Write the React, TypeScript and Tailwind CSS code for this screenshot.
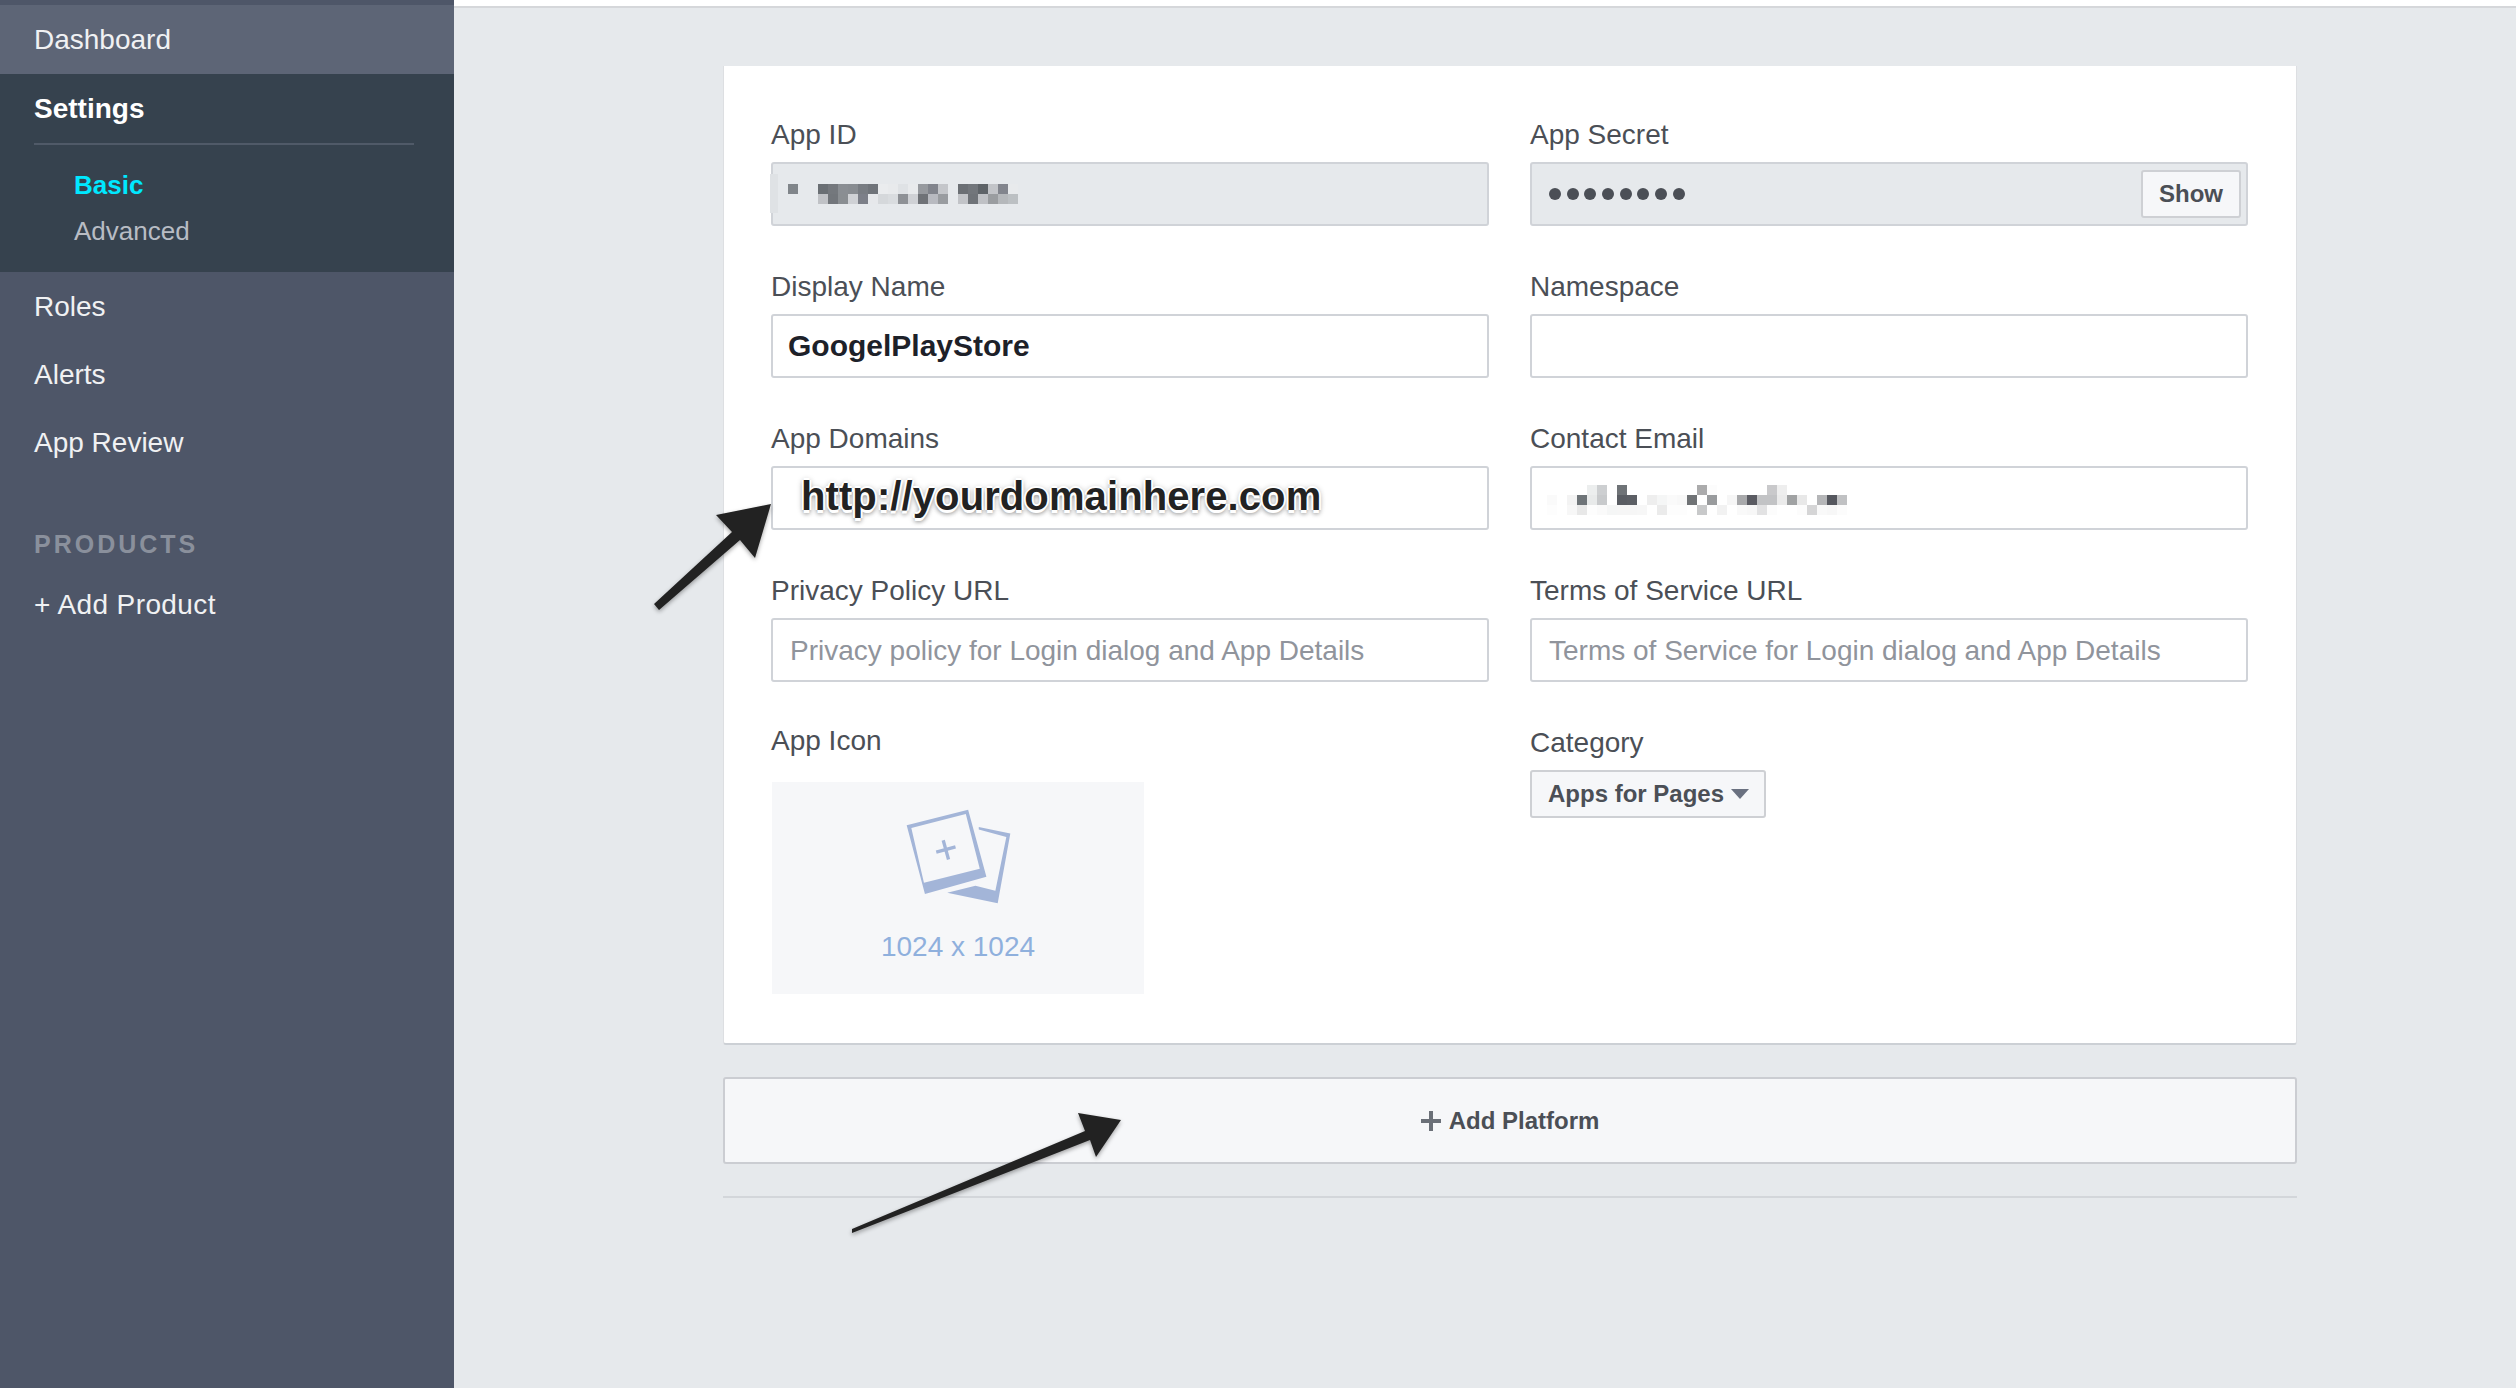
import React from 'react'

type Block = [number, number, string];

// pixelated (censored) text blocks: column, row, colour
const appIdBlocks: Block[] = [
    [0, 0, '#80858a'], [3, 0, '#6a6f74'], [4, 0, '#74787d'], [5, 0, '#8a8e93'], [6, 0, '#888c91'], [7, 0, '#787c82'], [8, 0, '#70747a'],
    [9, 0, '#eaecee'], [10, 0, '#e8eaec'], [11, 0, '#dfe2e5'], [12, 0, '#e8eaec'], [13, 0, '#96999e'], [14, 0, '#81848c'], [15, 0, '#c4c6ca'],
    [17, 0, '#6b6f74'], [18, 0, '#72767b'], [19, 0, '#5e6368'], [20, 0, '#c2c4c8'], [21, 0, '#82858d'], [22, 0, '#e8eaec'],
    [3, 1, '#c0c2c6'], [4, 1, '#72767b'], [5, 1, '#8a8e92'], [6, 1, '#cfd1d5'], [7, 1, '#7c7f88'], [8, 1, '#e6e8eb'], [9, 1, '#d5d8db'],
    [10, 1, '#d9dcdf'], [11, 1, '#8e9196'], [12, 1, '#cfd1d5'], [13, 1, '#6f7277'], [14, 1, '#b8bac0'], [15, 1, '#999ca0'],
    [17, 1, '#c2c4c8'], [18, 1, '#6f7378'], [19, 1, '#bfc1c5'], [20, 1, '#9a9da0'], [21, 1, '#b5b8bb'], [22, 1, '#bcc0c3'],
];

const emailBlocks: Block[] = [
    [4, 0, '#eceeee'], [5, 0, '#cdcfd1'], [7, 0, '#6f7377'], [15, 0, '#ababac'], [16, 0, '#fcfcfc'], [22, 0, '#c9c9cb'], [23, 0, '#eeeeee'],
    [0, 1, '#fafafa'], [2, 1, '#f3f3f3'], [3, 1, '#6e7478'], [4, 1, '#e8eaea'], [5, 1, '#c8cacc'], [7, 1, '#5a5d63'], [8, 1, '#5c5f65'],
    [10, 1, '#eeeeee'], [11, 1, '#f5f6f6'], [12, 1, '#fafafa'], [13, 1, '#f8f8f8'], [14, 1, '#707376'], [16, 1, '#999b9d'], [18, 1, '#f6f6f6'],
    [19, 1, '#a8a9ab'], [20, 1, '#5a5b62'], [21, 1, '#c2c3c5'], [22, 1, '#c2c3c5'], [23, 1, '#ebebeb'], [24, 1, '#a0a2a3'], [25, 1, '#e8e8e8'],
    [27, 1, '#b5b6b8'], [28, 1, '#55575e'], [29, 1, '#c0c1c3'],
    [0, 2, '#fdfdfd'], [2, 2, '#f7f7f7'], [3, 2, '#e8e8e8'], [4, 2, '#fdfdfd'], [5, 2, '#fafafa'], [6, 2, '#f5f6f6'], [7, 2, '#f6f6f6'],
    [8, 2, '#f6f6f6'], [9, 2, '#f7f7f7'], [11, 2, '#ebebeb'], [12, 2, '#fdfdfd'], [13, 2, '#fdfdfd'], [15, 2, '#c8c9ca'], [17, 2, '#f2f2f2'],
    [19, 2, '#f9f9f9'], [20, 2, '#f7f7f7'], [21, 2, '#e2e2e3'], [22, 2, '#fcfcfc'], [25, 2, '#fcfcfc'], [26, 2, '#d5d5d6'], [27, 2, '#f9f9f9'],
    [28, 2, '#f7f7f7'], [29, 2, '#fcfcfc'],
];

function Pixels({ blocks, cols, rows }: { blocks: Block[]; cols: number; rows: number }) {
    return (
        <svg width={cols * 10} height={rows * 10} viewBox={`0 0 ${cols * 10} ${rows * 10}`} shapeRendering="crispEdges">
            {blocks.map(([c, r, color]) => (
                <rect key={`${c}-${r}`} x={c * 10} y={r * 10} width="10" height="10" fill={color} />
            ))}
        </svg>
    );
}

function Label({ children }: { children: React.ReactNode }) {
    return <div className="h-10 mb-[7px] flex items-center text-[28px] text-[#4b4f56]">{children}</div>;
}

function Box({ children, disabled }: { children?: React.ReactNode; disabled?: boolean }) {
    return (
        <div className={`relative h-16 flex items-center border-2 border-[#d0d3d8] rounded-[3px] px-[14px] text-[28px] ${disabled ? 'bg-[#e6e9ec]' : 'bg-white'}`}>
            {children}
        </div>
    );
}

function NavItem({ children }: { children: React.ReactNode }) {
    return <div className="h-[68px] flex items-center pl-[34px] pt-[2px] text-[28px] text-[#f0f1f3]">{children}</div>;
}

function Sidebar() {
    return (
        <aside className="w-[454px] shrink-0 bg-[#4e5668] pt-[5px]">
            <div className="h-[69px] flex items-center pl-[34px] pt-px bg-[#5d6576] text-[28px] text-[#f0f1f3]">Dashboard</div>
            <div className="h-[198px] bg-[#36424e]">
                <div className="h-[69px] flex items-center pl-[34px] text-[28px] font-bold text-white">Settings</div>
                <div className="ml-[34px] mr-10 h-[2px] bg-[#505a68]"></div>
                <div className="pl-[74px] pt-[17px] text-[26px]">
                    <div className="h-[46px] flex items-center font-bold text-[#00e8ff]">Basic</div>
                    <div className="h-[46px] flex items-center text-[#b8bcc4]">Advanced</div>
                </div>
            </div>
            <NavItem>Roles</NavItem>
            <NavItem>Alerts</NavItem>
            <NavItem>App Review</NavItem>
            <div className="mt-[42px] h-[52px] flex items-center pl-[34px] pt-px text-[25px] font-bold tracking-[3px] text-[#8a909c]">PRODUCTS</div>
            <NavItem><span className="tracking-[0.4px]">+ Add Product</span></NavItem>
        </aside>
    );
}

function AppIconGlyph() {
    return (
        <svg width="108" height="98" viewBox="490 260 325 295" fill="#a3b5d8">
            <path fillRule="evenodd" d="M498 315 L683 268 L738 470 L553 522 Z M512 323 L676 281 L718 446 L550 488 Z" />
            <path d="M587 396 L645 380 M608 360 L624 418" stroke="#a3b5d8" strokeWidth="10" fill="none" />
            <path d="M715 320 L810 340 L772 550 L620 518 L705 497 L765 512 L798 350 L715 328 Z" />
        </svg>
    );
}

function Form() {
    return (
        <div className="bg-white border-x border-x-[#dddfe2] border-b-2 border-b-[#ccd0d5] rounded-b-[3px] pl-[47px] pr-[48px] pt-[49px] pb-[49px]">
            <div className="grid grid-cols-2 gap-x-[41px] gap-y-[41px]">
                <div>
                    <Label>App ID</Label>
                    <Box disabled>
                        <div className="absolute -left-[3px] top-[10px] w-2 h-[39px] bg-[#dfe2e5]"></div>
                        <div className="pl-px"><Pixels blocks={appIdBlocks} cols={23} rows={2} /></div>
                    </Box>
                </div>
                <div>
                    <Label>App Secret</Label>
                    <Box disabled>
                        <div className="flex gap-[5.7px] pl-[3px]">
                            {[0, 1, 2, 3, 4, 5, 6, 7].map((i) => (
                                <div key={i} className="w-3 h-3 rounded-full bg-[#4b4f56]"></div>
                            ))}
                        </div>
                        <div className="absolute right-[5px] top-[6px] w-[100px] h-12 flex items-center justify-center bg-[#f6f7f9] border-2 border-[#ced0d4] rounded-[3px] text-2xl font-bold text-[#4b4f56]">Show</div>
                    </Box>
                </div>

                <div>
                    <Label>Display Name</Label>
                    <Box><span className="pl-px -mt-px text-[30px] font-bold text-[#1d2129]">GoogelPlayStore</span></Box>
                </div>
                <div>
                    <Label>Namespace</Label>
                    <Box />
                </div>

                <div>
                    <Label>App Domains</Label>
                    <Box>
                        <span className="pl-[14px] -mt-[5px] text-[40px] tracking-[0.1px] font-bold text-[#222222] [text-shadow:2px_0_0_#fff,-2px_0_0_#fff,0_-2px_0_#fff,0_3px_0_#fff,0_1px_6px_#888,0_4px_4px_#aaa]">http://yourdomainhere.com</span>
                    </Box>
                </div>
                <div>
                    <Label>Contact Email</Label>
                    <Box>
                        <div className="mt-[3px] pl-px"><Pixels blocks={emailBlocks} cols={30} rows={3} /></div>
                    </Box>
                </div>

                <div>
                    <Label>Privacy Policy URL</Label>
                    <Box><span className="pl-[3px] pt-px text-[#90949c]">Privacy policy for Login dialog and App Details</span></Box>
                </div>
                <div>
                    <Label>Terms of Service URL</Label>
                    <Box><span className="pl-[3px] pt-px text-[#90949c]">Terms of Service for Login dialog and App Details</span></Box>
                </div>

                <div className="-mt-[3px]">
                    <div className="h-10 mb-[22px] flex items-center pt-px text-[28px] text-[#4b4f56]">App Icon</div>
                    <div className="ml-px w-[372px] h-[212px] bg-[#f6f7f9] flex flex-col items-center pt-[25px]">
                        <AppIconGlyph />
                        <div className="mt-[21px] text-[28px] text-[#8fb0dd]">1024 x 1024</div>
                    </div>
                </div>
                <div>
                    <Label>Category</Label>
                    <div className="w-[236px] h-12 flex items-center pl-4 bg-[#f6f7f9] border-2 border-[#ced0d4] rounded-[3px] text-2xl font-bold text-[#4b4f56]">
                        Apps for Pages
                        <svg className="ml-[7px]" width="18" height="10" viewBox="0 0 18 10" fill="#6a7180"><path d="M0 0 H18 L9 10 Z" /></svg>
                    </div>
                </div>
            </div>
        </div>
    );
}

export default function App() {
    return (
        <div className="relative h-[1388px] flex overflow-hidden font-['Liberation_Sans',Arial,sans-serif]">
            <Sidebar />
            <main className="flex-1 bg-[#e6e9ec]">
                <div className="h-[6px] bg-white"></div>
                <div className="h-[2px] bg-[#d5d7da]"></div>
                <div className="w-[1574px] ml-[269px] mt-[58px]">
                    <Form />
                    <div className="mt-[32px] h-[87px] flex items-center justify-center gap-2 bg-[#f6f7f9] border-2 border-[#cbcdd2] rounded-[3px] text-2xl font-bold text-[#4b4f56]">
                        <svg width="20" height="20" viewBox="0 0 20 20" fill="#6b7078"><path d="M8 0 H12 V8 H20 V12 H12 V20 H8 V12 H0 V8 H8 Z" /></svg>
                        Add Platform
                    </div>
                    <div className="mt-[32px] h-[2px] bg-[#d3d6da]"></div>
                </div>
            </main>

            {/* annotation arrows drawn over the screenshot */}
            <svg className="absolute inset-0 pointer-events-none drop-shadow-[0_2px_2px_rgba(0,0,0,0.35)]" width="2516" height="1388" viewBox="0 0 2516 1388" fill="#222222">
                <polygon points="771,504 716,515 732,532 654,604 659,610 740,540 755,558" />
                <polygon points="1121,1120 1078,1113 1085,1131 852,1229 852,1233 1090,1140 1096,1157" />
            </svg>
        </div>
    );
}
